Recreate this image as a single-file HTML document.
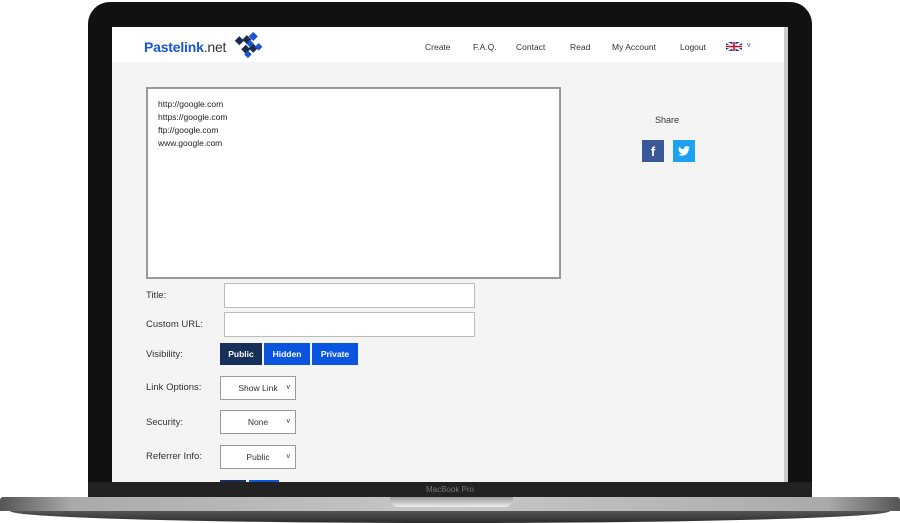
<!DOCTYPE html>
<html><head><style>
*{box-sizing:border-box;margin:0;padding:0}
body{width:900px;height:523px;background:#fff;position:relative;overflow:hidden;font-family:"Liberation Sans",sans-serif;}
.bezel{position:absolute;left:88px;top:2px;width:724px;height:500px;background:#111;border-radius:22px 22px 0 0;}
.screen{position:absolute;left:112px;top:27px;width:676px;height:455px;background:#f4f4f4;overflow:hidden;}
.hdr{position:absolute;left:0;top:0;width:676px;height:35px;background:#fff;}
.logo{position:absolute;left:32px;top:12px;font-size:14px;color:#1a55d8;font-weight:bold;letter-spacing:-0.2px}
.logo span{font-weight:normal;color:#333}
.nav{position:absolute;top:15px;font-size:8.5px;color:#333}
.sb{position:absolute;right:0;top:0;width:4px;height:455px;background:#ccc}
.lbl{position:absolute;left:34px;font-size:9.5px;color:#333}
.inp{position:absolute;background:#fff;border:1px solid #bbb}
.btn{position:absolute;top:316px;height:22px;color:#fff;font-size:8.5px;font-weight:bold;text-align:center;line-height:22px;background:#0a55e0}
.sel{position:absolute;left:108px;width:76px;height:24px;background:#fff;border:1px solid #999;font-size:8.5px;color:#333;line-height:22px;text-align:center}
.sel:after{content:"v";position:absolute;right:5px;font-size:7px}
</style></head><body>
<div class="bezel"></div>
<div class="screen">
 <div class="hdr">
  <div class="logo">Pastelink<span>.net</span></div>
  <svg style="position:absolute;left:122px;top:4px" width="30" height="28" viewBox="0 0 28 26">
   <g fill="#1b2b48"><rect x="2" y="6" width="6" height="6" transform="rotate(45 5 9)"/><rect x="9" y="5" width="6" height="6" transform="rotate(45 12 8)"/><rect x="15" y="13" width="6" height="6" transform="rotate(45 18 16)"/><rect x="8" y="14" width="6" height="6" transform="rotate(45 11 17)"/></g>
   <g fill="#1a55d8"><rect x="15" y="2" width="6" height="6" transform="rotate(45 18 5)"/><rect x="13" y="9" width="5" height="5" transform="rotate(45 15 11)"/><rect x="21" y="12" width="5" height="5" transform="rotate(45 23 14)"/><rect x="11" y="19" width="5" height="5" transform="rotate(45 13 21)"/></g>
  </svg>
  <div class="nav" style="left:313px">Create</div>
  <div class="nav" style="left:361px">F.A.Q.</div>
  <div class="nav" style="left:404px">Contact</div>
  <div class="nav" style="left:458px">Read</div>
  <div class="nav" style="left:500px">My Account</div>
  <div class="nav" style="left:568px">Logout</div>
  <svg style="position:absolute;left:614px;top:15px" width="16" height="9"><rect width="16" height="9" fill="#1f3a8a"/><path d="M0 0L16 9M16 0L0 9" stroke="#fff" stroke-width="2"/><path d="M8 0V9M0 4.5H16" stroke="#fff" stroke-width="3"/><path d="M8 0V9M0 4.5H16" stroke="#c8102e" stroke-width="1.6"/></svg>
  <div class="nav" style="left:635px;color:#1a55d8;font-size:7px">v</div>
 </div>
 <div class="inp" style="left:34px;top:60px;width:415px;height:192px;border:2px solid #999;padding:9px 10px;font-size:8.5px;color:#222;line-height:13px">http://google.com<br>https://google.com<br>ftp://google.com<br>www.google.com</div>
 <div style="position:absolute;left:543px;top:88px;font-size:9px;color:#333">Share</div>
 <div style="position:absolute;left:530px;top:113px;width:22px;height:22px;background:#3b5998;color:#fff;font-weight:bold;font-size:13px;text-align:center;line-height:23px">f</div>
 <div style="position:absolute;left:561px;top:113px;width:22px;height:22px;background:#1da1f2">
  <svg width="22" height="22" viewBox="0 0 24 24"><path transform="translate(5 5) scale(0.58)" fill="#fff" d="M23 3a10.9 10.9 0 0 1-3.14 1.53 4.48 4.48 0 0 0-7.86 3v1A10.66 10.66 0 0 1 3 4s-4 9 5 13a11.64 11.64 0 0 1-7 2c9 5 20 0 20-11.5 0-.28-.03-.56-.08-.83A7.72 7.72 0 0 0 23 3z"/></svg>
 </div>
 <div class="lbl" style="top:263px">Title:</div>
 <div class="inp" style="left:112px;top:256px;width:251px;height:25px"></div>
 <div class="lbl" style="top:292px">Custom URL:</div>
 <div class="inp" style="left:112px;top:285px;width:251px;height:25px"></div>
 <div class="lbl" style="top:322px">Visibility:</div>
 <div class="btn" style="left:108px;width:42px;background:#16305a">Public</div>
 <div class="btn" style="left:152px;width:46px">Hidden</div>
 <div class="btn" style="left:200px;width:46px">Private</div>
 <div class="lbl" style="top:355px">Link Options:</div>
 <div class="sel" style="top:349px">Show Link</div>
 <div class="lbl" style="top:390px">Security:</div>
 <div class="sel" style="top:383px">None</div>
 <div class="lbl" style="top:424px">Referrer Info:</div>
 <div class="sel" style="top:418px">Public</div>
 <div style="position:absolute;left:108px;top:453px;width:26px;height:10px;background:#16305a"></div>
 <div style="position:absolute;left:137px;top:453px;width:30px;height:10px;background:#0a55e0"></div>
 <div class="sb"></div>
</div>
<div style="position:absolute;left:88px;top:482px;width:724px;height:15px;background:#222;color:#777;font-size:8px;text-align:center;line-height:15px">MacBook Pro</div>
<div style="position:absolute;left:0;top:497px;width:900px;height:14px;background:linear-gradient(90deg,#555 0%,#aaa 8%,#c8c8c8 50%,#aaa 92%,#555 100%);border-radius:3px 3px 0 0"></div>
<div style="position:absolute;left:390px;top:497px;width:123px;height:10px;background:linear-gradient(#999,#eee);border-radius:0 0 8px 8px"></div>
<div style="position:absolute;left:10px;top:511px;width:880px;height:12px;background:linear-gradient(#555,#2a2a2a);border-radius:0 0 50% 50%/0 0 100% 100%"></div>
</body></html>
